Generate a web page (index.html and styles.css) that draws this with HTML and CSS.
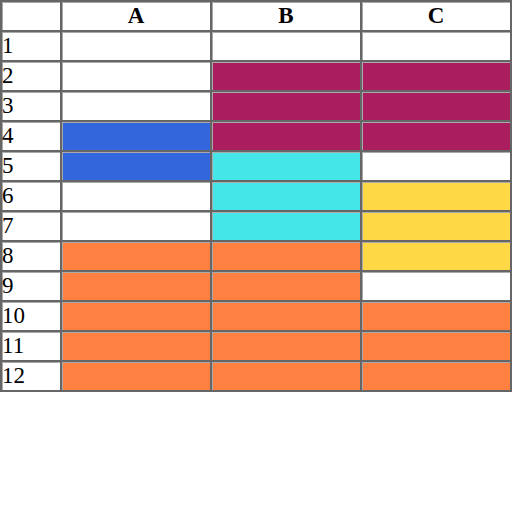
FILE: index.html
```html
<!DOCTYPE html>
<html>
<head>
<meta charset="UTF-8">
<link rel="stylesheet" href="styles.css">
</head>
<body>
<table class="sheet">
	<tr><th class="corner"></th><th>A</th><th>B</th><th>C</th></tr>
	<tr><td class="num">1</td><td></td><td></td><td></td></tr>
	<tr><td class="num">2</td><td></td><td class="plum"></td><td class="plum"></td></tr>
	<tr><td class="num">3</td><td></td><td class="plum"></td><td class="plum"></td></tr>
	<tr><td class="num">4</td><td class="blue"></td><td class="plum"></td><td class="plum"></td></tr>
	<tr><td class="num">5</td><td class="blue"></td><td class="cyan"></td><td></td></tr>
	<tr><td class="num">6</td><td></td><td class="cyan"></td><td class="yellow"></td></tr>
	<tr><td class="num">7</td><td></td><td class="cyan"></td><td class="yellow"></td></tr>
	<tr><td class="num">8</td><td class="orange"></td><td class="orange"></td><td class="yellow"></td></tr>
	<tr><td class="num">9</td><td class="orange"></td><td class="orange"></td><td></td></tr>
	<tr><td class="num">10</td><td class="orange"></td><td class="orange"></td><td class="orange"></td></tr>
	<tr><td class="num">11</td><td class="orange"></td><td class="orange"></td><td class="orange"></td></tr>
	<tr><td class="num">12</td><td class="orange"></td><td class="orange"></td><td class="orange"></td></tr>
</table>
</body>
</html>
```
FILE: styles.css
```css
* {
	margin: 0;
	padding: 0;
}
body {
	font-family: 'Liberation Serif', serif;
	font-size: 23px;
	background: #fff;
}
.sheet {
	border-collapse: collapse;
	border: 1px solid #666;
}
.sheet th, .sheet td {
	border: 2px solid #666;
	height: 28px;
	width: 148px;
	background: #fff;
	box-shadow: inset 1px 1px 0 #aaa;
}
.sheet th {
	font-weight: bold;
	text-align: center;
	line-height: 28px;
}
.sheet .corner, .sheet .num {
	width: 58px;
}
.sheet .num {
	text-align: left;
	vertical-align: middle;
	line-height: 28px;
}
.plum { background: #aa1e5f !important; }
.blue { background: #3366dd !important; }
.cyan { background: #44e6e8 !important; }
.yellow { background: #ffd845 !important; }
.orange { background: #ff8040 !important; }
```
